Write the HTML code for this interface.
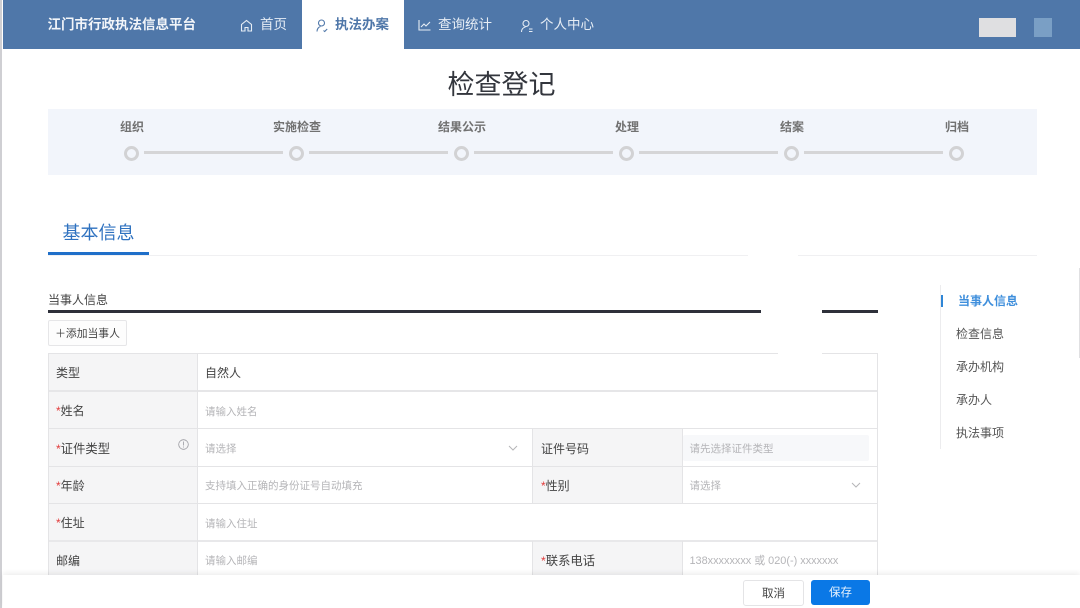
<!DOCTYPE html>
<html lang="zh"><head><meta charset="utf-8"><title>检查登记</title>
<style>
html,body{margin:0;padding:0;background:#fff}
#p{position:relative;width:1080px;height:608px;overflow:hidden;background:#fff;font-family:"Liberation Sans","Noto Sans CJK SC",sans-serif;color:#444;filter:blur(.35px)}
#p div,#p span.a,#p svg{position:absolute}
.t{white-space:nowrap;line-height:20px}
.nav{font-size:13.5px;color:#e6edf5;top:15px}
.st{font-size:12px;font-weight:700;color:#717171;top:117px}
.dot{top:146px;width:9px;height:9px;border:3px solid #d2d2d4;border-radius:50%;background:#f2f5fb}
.ln{top:151px;height:3px;width:139px;background:#d5d5d7}
.lb{background:#f5f5f6}
.h{height:1px;background:#e4e4e6}
.v{width:1px;background:#e4e4e6}
.k{font-size:12px;color:#444}
.k i{color:#e23c3c;font-style:normal}
.ph{font-size:10.5px;color:#b5b5b8}
.m{font-size:12px;color:#555;left:956px}
</style></head><body><div id="p">
<div style="left:0;top:0;width:2px;height:608px;background:#cfcfd3"></div>
<div style="left:3px;top:0;width:1077px;height:49px;background:#4f77a9"></div>
<div style="left:302px;top:0;width:102px;height:49px;background:#fff"></div>
<div class="t" style="left:47.5px;top:15px;font-size:13.5px;font-weight:700;color:#f2f5f9">江门市行政执法信息平台</div>

<svg style="left:240px;top:19px" width="13" height="13" viewBox="0 0 13 13" fill="none" stroke="#e6edf5" stroke-width="1.1"><path d="M1.5 12V5.500L6.500 1.500 11.500 5.500V12H8V8.500H5V12Z"/></svg>
<div class="t nav" style="left:260px">首页</div>
<svg style="left:316px;top:19px" width="12" height="14" viewBox="0 0 12 14" fill="none" stroke="#4f77a9" stroke-width="1.1"><circle cx="5.500" cy="4" r="3"/><path d="M1 12.500c0-2.500 1.500-4.500 3.500-5M7.500 11.500l1.200 1 2.500-2.500"/></svg>
<div class="t" style="left:335px;top:15px;color:#4f77a9;font-weight:700;font-size:13.5px">执法办案</div>
<svg style="left:418px;top:19px" width="13" height="12" viewBox="0 0 13 12" fill="none" stroke="#e6edf5" stroke-width="1.1"><path d="M1 1V11H12.500M3 8 6 5 8 7 12 3"/></svg>
<div class="t nav" style="left:438px">查询统计</div>
<svg style="left:520px;top:19px" width="14" height="14" viewBox="0 0 14 14" fill="none" stroke="#e6edf5" stroke-width="1.1"><circle cx="6" cy="4.500" r="3"/><path d="M1.500 13c0-2.500 1.500-4.500 4-5M9 10h3.500M9 12.500h3.500"/></svg>
<div class="t nav" style="left:540px">个人中心</div>
<div style="left:979px;top:18px;width:37px;height:19px;background:#dfdfe1"></div>
<div style="left:1034px;top:18px;width:18px;height:19px;background:#7a9fc5"></div>

<div class="t" style="left:447.5px;top:69px;font-size:27px;line-height:32px;color:#33363d">检查登记</div>

<div style="left:48px;top:109px;width:989px;height:66px;background:#f2f5fb"></div>
<div class="t st" style="left:120px">组织</div>
<div class="t st" style="left:273px">实施检查</div>
<div class="t st" style="left:438px">结果公示</div>
<div class="t st" style="left:615px">处理</div>
<div class="t st" style="left:780px">结案</div>
<div class="t st" style="left:945px">归档</div>
<div class="dot" style="left:124px"></div><div class="ln" style="left:144px"></div>
<div class="dot" style="left:289px"></div><div class="ln" style="left:309px"></div>
<div class="dot" style="left:454px"></div><div class="ln" style="left:474px"></div>
<div class="dot" style="left:619px"></div><div class="ln" style="left:639px"></div>
<div class="dot" style="left:784px"></div><div class="ln" style="left:804px"></div>
<div class="dot" style="left:949px"></div>

<div class="t" style="left:62.500px;top:223px;font-size:18px;color:#2f72c0">基本信息</div>
<div style="left:48px;top:255px;width:989px;height:1px;background:#f0f0f2"></div>
<div style="left:48px;top:252px;width:101px;height:3px;background:#1f6fc9"></div>
<div style="left:748px;top:255px;width:50px;height:2px;background:#fff"></div>

<div class="t" style="left:48px;top:290px;font-size:12px;color:#444">当事人信息</div>
<div style="left:48px;top:310px;width:830px;height:3px;background:#2e303a"></div>
<div style="left:761px;top:308px;width:61px;height:8px;background:#fff"></div>

<div class="t" style="left:48px;top:320px;width:77px;height:24px;border:1px solid #e6e6e8;border-radius:2px;background:#fdfdfd;font-size:10.800px;line-height:27px;text-align:center;color:#444">＋添加当事人</div>

<div class="lb" style="left:48px;top:353px;width:150px;height:222px"></div>
<div class="lb" style="left:533px;top:429px;width:150px;height:75px"></div>
<div class="lb" style="left:533px;top:541px;width:150px;height:34px"></div>

<div class="h" style="left:48px;top:353px;width:830px"></div>
<div style="left:48px;top:390px;width:830px;height:2px;background:#e6e6e8"></div>
<div class="h" style="left:48px;top:428px;width:830px"></div>
<div class="h" style="left:48px;top:466px;width:830px"></div>
<div class="h" style="left:48px;top:503px;width:830px"></div>
<div style="left:48px;top:540px;width:830px;height:2px;background:#e8e8ea"></div>
<div class="v" style="left:47.500px;top:353px;height:222px"></div>
<div class="v" style="left:197px;top:353px;height:222px"></div>
<div class="v" style="left:877px;top:353px;height:222px"></div>
<div class="v" style="left:532px;top:429px;height:75px"></div>
<div class="v" style="left:682px;top:429px;height:75px"></div>
<div class="v" style="left:532px;top:541px;height:34px"></div>
<div class="v" style="left:682px;top:541px;height:34px"></div>
<div style="left:778px;top:350px;width:44px;height:6px;background:#fff"></div>

<div class="t k" style="left:56px;top:363px">类型</div>
<div class="t k" style="left:205px;top:363px">自然人</div>
<div class="t k" style="left:56px;top:401px"><i>*</i>姓名</div>
<div class="t ph" style="left:205px;top:401.500px">请输入姓名</div>
<div class="t k" style="left:56px;top:439px;font-size:12.300px"><i>*</i>证件类型</div>
<svg style="left:178px;top:439px" width="11" height="11" viewBox="0 0 11 11" fill="none" stroke="#9a9aa0" stroke-width=".8"><circle cx="5.500" cy="5.500" r="4.800"/><path d="M5.500 2.500V6.500M5.500 7.500V8.500"/></svg>
<div class="t ph" style="left:205px;top:439px">请选择</div>
<svg style="left:508px;top:445px" width="10" height="7" viewBox="0 0 10 7" fill="none" stroke="#b5b5b8"><path d="M1 1 5 5 9 1"/></svg>
<div class="t k" style="left:541px;top:439px">证件号码</div>
<div style="left:683px;top:435px;width:186px;height:26px;background:#f7f8fa;border-radius:2px"></div>
<div class="t ph" style="left:689.500px;top:439px">请先选择证件类型</div>
<div class="t k" style="left:56px;top:476px"><i>*</i>年龄</div>
<div class="t ph" style="left:205px;top:476px">支持填入正确的身份证号自动填充</div>
<div class="t k" style="left:541px;top:476px"><i>*</i>性别</div>
<div class="t ph" style="left:689.500px;top:476px">请选择</div>
<svg style="left:851px;top:482px" width="10" height="7" viewBox="0 0 10 7" fill="none" stroke="#b5b5b8"><path d="M1 1 5 5 9 1"/></svg>
<div class="t k" style="left:56px;top:513px"><i>*</i>住址</div>
<div class="t ph" style="left:205px;top:514px">请输入住址</div>
<div class="t k" style="left:56px;top:551px">邮编</div>
<div class="t ph" style="left:205px;top:551px">请输入邮编</div>
<div class="t k" style="left:541px;top:551px;font-size:12.300px"><i>*</i>联系电话</div>
<div class="t ph" style="left:689.500px;top:551px;font-size:10.900px">138xxxxxxxx 或 020(-) xxxxxxx</div>

<div class="v" style="left:940px;top:285px;height:164px;background:#ececee"></div>
<div style="left:941px;top:295px;width:2px;height:12px;background:#2f86d6"></div>
<div class="t" style="left:958px;top:291px;font-size:12px;font-weight:700;color:#3f8fdc">当事人信息</div>
<div class="t m" style="top:324px">检查信息</div>
<div class="t m" style="top:357px">承办机构</div>
<div class="t m" style="top:390px">承办人</div>
<div class="t m" style="top:423px">执法事项</div>
<div style="left:1079px;top:268px;width:1px;height:90px;background:#e0e0e2"></div>

<div style="left:3px;top:575px;width:1077px;height:33px;background:#fff;box-shadow:0 -2px 5px rgba(0,0,0,.07)"></div>
<div class="t" style="left:743px;top:580px;width:59px;height:24px;border:1px solid #e4e4e6;border-radius:3px;font-size:11.500px;line-height:26px;text-align:center;color:#444;background:#fff">取消</div>
<div class="t" style="left:811px;top:580px;width:59px;height:25px;border-radius:3px;font-size:11.500px;line-height:27px;text-align:center;color:#eaf3fd;background:#0a78e6">保存</div>
</div></body></html>
